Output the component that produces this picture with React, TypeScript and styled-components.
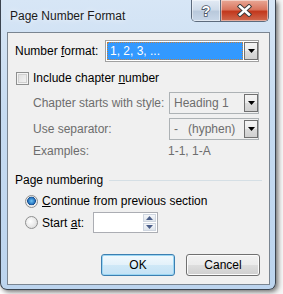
import styled, { createGlobalStyle } from 'styled-components';

// Global page reset
const GlobalStyle = createGlobalStyle`
  html, body {
    margin: 0;
    padding: 0;
  }
  body {
    width: 283px;
    height: 294px;
    overflow: hidden;
    background: #f3f3f3;
    font-family: 'Segoe UI', 'Liberation Sans', Arial, sans-serif;
    font-size: 12px;
  }
`;

// Desktop behind the dialog
const Desktop = styled.div`
  width: 283px;
  height: 294px;
  background: linear-gradient(90deg, #ffffff 0%, #f6f6f6 100%);
`;

// Window frame
const Window = styled.div`
  width: 276px;
  height: 290px;
  box-sizing: border-box;
  display: flex;
  flex-direction: column;
  border: 1px solid #3b4450;
  border-top: none;
  border-radius: 0 0 7px 7px;
  background: linear-gradient(180deg, #d7e6f6 0%, #c6dbf1 40%, #bcd4ee 100%);
  box-shadow: 2px 2px 5px rgba(0, 0, 0, 0.55);
  padding: 0 5px 4px 6px;
`;

const TitleBar = styled.div`
  height: 32px;
  display: flex;
  align-items: flex-start;
  justify-content: space-between;
`;

const Title = styled.div`
  margin: 9px 0 0 3px;
  font-size: 12px;
  color: #1a1a1a;
  text-shadow: 0 0 6px rgba(255, 255, 255, 0.9);
`;

const CaptionButtons = styled.div`
  display: flex;
  margin-right: 1px;
  height: 21px;
  border: 1px solid #5d6b7d;
  border-top: none;
  border-radius: 0 0 5px 5px;
  overflow: hidden;
`;

const CaptionButton = styled.div<{ $close?: boolean }>`
  width: ${(p) => (p.$close ? '47px' : '28px')};
  height: 100%;
  display: flex;
  align-items: center;
  justify-content: center;
  box-shadow: inset 0 0 0 1px rgba(255, 255, 255, 0.45);
  background: ${(p) =>
    p.$close
      ? 'linear-gradient(180deg, #e9a896 0%, #d9765f 45%, #c2381d 55%, #d06a4f 100%)'
      : 'linear-gradient(180deg, #e3ebf5 0%, #cfdbe9 45%, #b9c9dc 55%, #c9d7e8 100%)'};
  & + & {
    border-left: 1px solid #5d6b7d;
  }
`;

// Client area
const Client = styled.div`
  flex: 1;
  border: 1px solid #7a8591;
  background: #f0f0f0;
  padding: 0 9px 0 7px;
  display: flex;
  flex-direction: column;
  color: #000;
`;

const Row = styled.div<{ $top: number; $h: number; $indent?: number }>`
  display: flex;
  align-items: center;
  height: ${(p) => p.$h}px;
  margin-top: ${(p) => p.$top}px;
  padding-left: ${(p) => p.$indent ?? 0}px;
`;

const Label = styled.span<{ $w?: number; $disabled?: boolean }>`
  width: ${(p) => (p.$w ? `${p.$w}px` : 'auto')};
  flex: none;
  color: ${(p) => (p.$disabled ? '#6d6d6d' : '#000')};
  white-space: nowrap;
`;

// Combo box
const Combo = styled.div<{ $w: number; $disabled?: boolean }>`
  width: ${(p) => p.$w}px;
  height: 22px;
  box-sizing: border-box;
  border: 1px solid ${(p) => (p.$disabled ? '#adb2b5' : '#a0a0a0')};
  background: ${(p) => (p.$disabled ? '#f0f0f0' : '#ffffff')};
  display: flex;
  align-items: stretch;
  padding: 1px 0 1px 1px;
  color: ${(p) => (p.$disabled ? '#6d6d6d' : '#000')};
`;

const ComboText = styled.div<{ $selected?: boolean }>`
  flex: 1;
  display: flex;
  align-items: center;
  padding-left: 3px;
  white-space: pre;
  ${(p) =>
    p.$selected
      ? `
    background: #3399ff;
    color: #fff;
    outline: 1px dotted #c08040;
    outline-offset: -1px;
  `
      : ''}
`;

const DropButton = styled.div`
  width: 14px;
  box-sizing: border-box;
  margin-left: 1px;
  border: 1px solid #707070;
  background: linear-gradient(180deg, #f4f4f4 0%, #ebebeb 50%, #dcdcdc 51%, #d0d0d0 100%);
  display: flex;
  align-items: center;
  justify-content: center;
  margin-right: 0;
`;

const Arrow = () => (
  <svg width="7" height="4" viewBox="0 0 7 4">
    <path d="M0 0h7L3.5 4z" fill="#000" />
  </svg>
);

// Checkbox / radio
const CheckBox = styled.div`
  width: 13px;
  height: 13px;
  box-sizing: border-box;
  border: 1px solid #8e8f8f;
  background: linear-gradient(135deg, #dcdcdc 0%, #f6f6f6 100%);
  box-shadow: inset 0 0 0 1px #f4f4f4, inset 0 0 0 2px #d0d0d0;
  margin: 0 4px 0 1px;
`;

const Radio = styled.div<{ $checked?: boolean }>`
  width: 13px;
  height: 13px;
  box-sizing: border-box;
  border-radius: 50%;
  border: 1px solid #8e8f8f;
  background: ${(p) =>
    p.$checked
      ? 'radial-gradient(circle at 50% 45%, #6fc3f2 0%, #2f7fc7 35%, #1b4f8f 50%, #e9e9e9 56%, #f8f8f8 100%)'
      : 'radial-gradient(circle at 40% 40%, #ffffff 0%, #e6e6e6 60%, #d0d0d0 100%)'};
  margin: 0 4px 0 10px;
`;

const Mnemonic = styled.span`
  text-decoration: underline;
`;

// Group header
const GroupHeader = styled.div`
  display: flex;
  align-items: center;
  height: 16px;
  margin-top: 13px;
  margin-right: -2px;
  &::after {
    content: '';
    flex: 1;
    height: 1px;
    margin-left: 6px;
    background: #d5dfe5;
  }
`;

// Spin box
const Spin = styled.div`
  width: 65px;
  height: 21px;
  box-sizing: border-box;
  margin-left: 16px;
  border: 1px solid #abadb3;
  background: #fff;
  display: flex;
  justify-content: flex-end;
  padding: 1px;
`;

const SpinButtons = styled.div`
  width: 13px;
  display: flex;
  flex-direction: column;
  gap: 1px;
`;

const SpinButton = styled.div`
  flex: 1;
  display: flex;
  align-items: center;
  justify-content: center;
  box-sizing: border-box;
  border: 1px solid #cfd6e0;
  background: linear-gradient(180deg, #f5f7fa 0%, #dfe5ec 100%);
`;

const SpinArrow = ({ up }: { up?: boolean }) => (
  <svg width="7" height="4" viewBox="0 0 7 4">
    <path d={up ? 'M0 4h7L3.5 0z' : 'M0 0h7L3.5 4z'} fill="#4b5f8a" />
  </svg>
);

// Button bar
const ButtonBar = styled.div`
  display: flex;
  justify-content: flex-end;
  gap: 11px;
  margin-top: 21px;
`;

const PushButton = styled.div<{ $default?: boolean }>`
  width: 74px;
  height: 22px;
  box-sizing: border-box;
  border-radius: 3px;
  display: flex;
  align-items: center;
  justify-content: center;
  border: 1px solid ${(p) => (p.$default ? '#3c7fb1' : '#707070')};
  background: ${(p) =>
    p.$default
      ? 'linear-gradient(180deg, #f2f9fd 0%, #e3f1fa 50%, #cfe8f7 51%, #c4e2f5 100%)'
      : 'linear-gradient(180deg, #f2f2f2 0%, #ebebeb 50%, #dddddd 51%, #cfcfcf 100%)'};
  box-shadow: inset 0 0 0 1px ${(p) => (p.$default ? '#9bd6f3' : '#fcfcfc')};
`;

const App = () => {
  return (
    <>
      <GlobalStyle />
      <Desktop>
        <Window>
          <TitleBar>
            <Title>Page Number Format</Title>
            <CaptionButtons>
              <CaptionButton>
                <svg width="12" height="15" viewBox="0 0 12 15">
                  <text
                    x="6"
                    y="12.5"
                    textAnchor="middle"
                    fontSize="14"
                    fontWeight="bold"
                    fontFamily="Liberation Sans, Arial, sans-serif"
                    fill="#fff"
                    stroke="#4a5668"
                    strokeWidth="1.6"
                    paintOrder="stroke"
                  >
                    ?
                  </text>
                </svg>
              </CaptionButton>
              <CaptionButton $close>
                <svg width="15" height="13" viewBox="0 0 15 13">
                  <path
                    d="M3 2.5L12 10.5M12 2.5L3 10.5"
                    stroke="#3b3b3b"
                    strokeWidth="4.4"
                    strokeLinecap="square"
                  />
                  <path
                    d="M3 2.5L12 10.5M12 2.5L3 10.5"
                    stroke="#fff"
                    strokeWidth="2.6"
                    strokeLinecap="square"
                  />
                </svg>
              </CaptionButton>
            </CaptionButtons>
          </TitleBar>
          <Client>
            <Row $top={7} $h={22}>
              <Label $w={90}>
                Number <Mnemonic>f</Mnemonic>ormat:
              </Label>
              <Combo $w={154}>
                <ComboText $selected>1, 2, 3, ...</ComboText>
                <DropButton>
                  <Arrow />
                </DropButton>
              </Combo>
            </Row>
            <Row $top={7} $h={18}>
              <CheckBox />
              <Label>
                Include chapter <Mnemonic>n</Mnemonic>umber
              </Label>
            </Row>
            <Row $top={5} $h={22} $indent={18}>
              <Label $w={136} $disabled>
                Chapter starts with style:
              </Label>
              <Combo $w={90} $disabled>
                <ComboText>Heading 1</ComboText>
                <DropButton>
                  <Arrow />
                </DropButton>
              </Combo>
            </Row>
            <Row $top={4} $h={22} $indent={18}>
              <Label $w={136} $disabled>
                Use separator:
              </Label>
              <Combo $w={90} $disabled>
                <ComboText>-   (hyphen)</ComboText>
                <DropButton>
                  <Arrow />
                </DropButton>
              </Combo>
            </Row>
            <Row $top={3} $h={16} $indent={18}>
              <Label $w={135} $disabled>
                Examples:
              </Label>
              <Label $disabled>1-1, 1-A</Label>
            </Row>
            <GroupHeader>Page numbering</GroupHeader>
            <Row $top={4} $h={18}>
              <Radio $checked />
              <Label>
                <Mnemonic>C</Mnemonic>ontinue from previous section
              </Label>
            </Row>
            <Row $top={2} $h={21}>
              <Radio />
              <Label $w={35}>
                Start <Mnemonic>a</Mnemonic>t:
              </Label>
              <Spin>
                <SpinButtons>
                  <SpinButton>
                    <SpinArrow up />
                  </SpinButton>
                  <SpinButton>
                    <SpinArrow />
                  </SpinButton>
                </SpinButtons>
              </Spin>
            </Row>
            <ButtonBar>
              <PushButton $default>OK</PushButton>
              <PushButton>Cancel</PushButton>
            </ButtonBar>
          </Client>
        </Window>
      </Desktop>
    </>
  );
};

export default App;
